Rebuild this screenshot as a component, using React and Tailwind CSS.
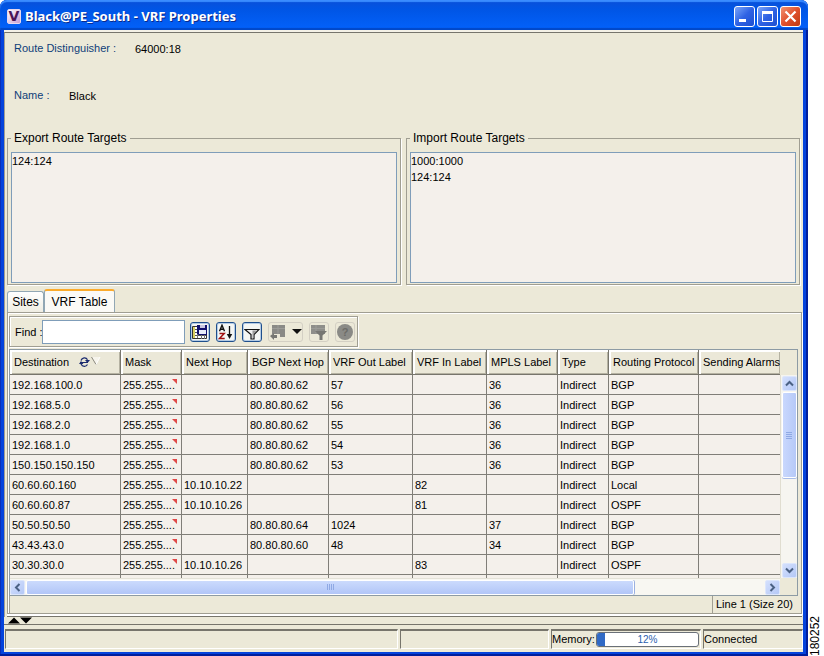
import { useState } from 'react'

const COLUMNS = [
  { key: 'destination', label: 'Destination', width: 'w-[111px]', sorted: true },
  { key: 'mask', label: 'Mask', width: 'w-[61px]' },
  { key: 'nextHop', label: 'Next Hop', width: 'w-[66px]' },
  { key: 'bgpNextHop', label: 'BGP Next Hop', width: 'w-[81px]' },
  { key: 'outLabel', label: 'VRF Out Label', width: 'w-[84px]' },
  { key: 'inLabel', label: 'VRF In Label', width: 'w-[74px]' },
  { key: 'mplsLabel', label: 'MPLS Label', width: 'w-[71px]' },
  { key: 'type', label: 'Type', width: 'w-[51px]' },
  { key: 'protocol', label: 'Routing Protocol', width: 'w-[90px]' },
  { key: 'alarms', label: 'Sending Alarms', width: 'w-auto' },
]

const MASK = '255.255....'

const ROUTES = [
  { destination: '192.168.100.0', mask: MASK, bgpNextHop: '80.80.80.62', outLabel: '57', mplsLabel: '36', type: 'Indirect', protocol: 'BGP' },
  { destination: '192.168.5.0', mask: MASK, bgpNextHop: '80.80.80.62', outLabel: '56', mplsLabel: '36', type: 'Indirect', protocol: 'BGP' },
  { destination: '192.168.2.0', mask: MASK, bgpNextHop: '80.80.80.62', outLabel: '55', mplsLabel: '36', type: 'Indirect', protocol: 'BGP' },
  { destination: '192.168.1.0', mask: MASK, bgpNextHop: '80.80.80.62', outLabel: '54', mplsLabel: '36', type: 'Indirect', protocol: 'BGP' },
  { destination: '150.150.150.150', mask: MASK, bgpNextHop: '80.80.80.62', outLabel: '53', mplsLabel: '36', type: 'Indirect', protocol: 'BGP' },
  { destination: '60.60.60.160', mask: MASK, nextHop: '10.10.10.22', inLabel: '82', type: 'Indirect', protocol: 'Local' },
  { destination: '60.60.60.87', mask: MASK, nextHop: '10.10.10.26', inLabel: '81', type: 'Indirect', protocol: 'OSPF' },
  { destination: '50.50.50.50', mask: MASK, bgpNextHop: '80.80.80.64', outLabel: '1024', mplsLabel: '37', type: 'Indirect', protocol: 'BGP' },
  { destination: '43.43.43.0', mask: MASK, bgpNextHop: '80.80.80.60', outLabel: '48', mplsLabel: '34', type: 'Indirect', protocol: 'BGP' },
  { destination: '30.30.30.0', mask: MASK, nextHop: '10.10.10.26', inLabel: '83', type: 'Indirect', protocol: 'OSPF' },
  {},
]

function TitleButton({ label, close, children }) {
  return (
    <button
      aria-label={label}
      className={
        close
          ? 'h-[21px] w-[21px] rounded-[3px] border border-white bg-linear-to-br from-[#f09070] via-[#e0502c] to-[#c03a10]'
          : 'h-[21px] w-[21px] rounded-[3px] border border-white bg-linear-to-br from-[#7ca4f8] via-[#2f62e4] to-[#1c4fd0]'
      }
    >
      <svg viewBox="0 0 19 19" className="h-[19px] w-[19px]" fill="none" stroke="#fff">
        {children}
      </svg>
    </button>
  )
}

function TitleBar() {
  return (
    <header className="flex h-[30px] shrink-0 items-center rounded-t-[7px] bg-linear-to-b from-[#0a4fd8] via-[#0055e5] via-30% to-[#0362fb] px-[7px] pt-[2px] shadow-[inset_0_2px_1px_#3a8cff,inset_0_-2px_1px_#0148c8]">
      <span className="flex h-[15px] w-[14px] items-center justify-center rounded-[2px] border border-[#e8d8ee] bg-linear-to-br from-white to-[#c89cd0] font-['DejaVu_Sans',sans-serif] text-[14px] leading-none font-bold text-[#4a1458]">
        V
      </span>
      <h1 className="ml-[4px] flex-1 truncate font-['Noto_Sans',sans-serif] text-[13px] font-bold text-white [text-shadow:1px_1px_0_#0a2a8c]">
        Black@PE_South - VRF Properties
      </h1>
      <div className="flex gap-[2px]">
        <TitleButton label="Minimize">
          <path d="M4 13.500h7" strokeWidth="3" />
        </TitleButton>
        <TitleButton label="Maximize">
          <path d="M4.500 5v9.500h10V5" />
          <path d="M4 5.500h11" strokeWidth="3" />
        </TitleButton>
        <TitleButton label="Close" close>
          <path d="M4.500 4.500l10 10M14.500 4.500l-10 10" strokeWidth="2.200" />
        </TitleButton>
      </div>
    </header>
  )
}

function TargetList({ title, targets }) {
  return (
    <fieldset className="min-w-0 flex-1 border border-[#a09e92] px-[3px] pt-[6px] pb-px shadow-[1px_1px_0_#fff]">
      <legend className="px-[3px] text-[12px] leading-4">{title}</legend>
      <ul className="h-[131px] border border-[#7f9db9] bg-[#f4f0eb] text-[11px] leading-4">
        {targets.map((target) => (
          <li key={target}>{target}</li>
        ))}
      </ul>
    </fieldset>
  )
}

function ToolButton({ label, children }) {
  return (
    <button
      aria-label={label}
      className="flex h-[20px] w-[20px] items-center justify-center rounded-[3px] border border-[#1f4f8c] bg-[#f4f6f4] shadow-[inset_0_0_0_1px_#b4cbe4]"
    >
      <svg viewBox="0 0 16 16" className="h-4 w-4 shrink-0">{children}</svg>
    </button>
  )
}

function Toolbar() {
  const [find, setFind] = useState('')

  return (
    <div className="flex h-[31px] w-[349px] shrink-0 items-center border border-[#a09e92] pl-[5px] shadow-[inset_1px_1px_0_#fff,1px_1px_0_#fff]">
      <label htmlFor="find" className="w-[27px] whitespace-nowrap">Find :</label>
      <input
        id="find"
        type="text"
        value={find}
        onChange={(e) => setFind(e.target.value)}
        className="h-6 w-[143px] border border-[#7f9db9] bg-white px-1 outline-none"
      />
      <div className="ml-[5px] flex gap-[6px]">
        <ToolButton label="Export table">
          <path d="M0.500 2.500h14v12h-14z" fill="#fff" stroke="#333" />
          <path d="M1 5.500h5M1 8.500h5M1 11.500h13" stroke="#555" />
          <path d="M5.500 3v11M9.500 10v5M12.500 10v5" stroke="#777" />
          <path d="M1 3h2v11H1z" fill="#d8cf60" />
          <path d="M5 1h10v10H6.500L5 9.500z" fill="#10106c" />
          <path d="M8 1h5v3H8z" fill="#c8c8e0" />
          <path d="M7 6h7v4H7z" fill="#e8ecfa" />
        </ToolButton>
        <ToolButton label="Sort table">
          <path d="M1.500 7.200L4 1.200l2.500 6M2.300 5.200h3.400" fill="none" stroke="#111" strokeWidth="1.400" />
          <path d="M1.500 9.500h4.700L1.500 14.500h5.200" fill="none" stroke="#a01010" strokeWidth="1.500" />
          <path d="M11.500 2v9" stroke="#111" strokeWidth="1.300" />
          <path d="M8.800 10h5.400l-2.700 5z" fill="#111" />
        </ToolButton>
        <ToolButton label="Filter">
          <path d="M1 5.500h14l-5 5V15H7v-4.500z" fill="#f0f0f0" stroke="#111" strokeWidth="1.200" />
          <path d="M8.500 6.500h4.500l-3.500 3.500v4h-1z" fill="#999" />
        </ToolButton>
        <button aria-label="Clear filter" className="flex h-[20px] w-[35px] items-center rounded-[3px] border border-[#d4d0c4]">
          <svg viewBox="0 0 33 18" className="h-[18px] w-[33px]">
            <path d="M3 2h13v12h-5v-3H3z" fill="#8a8a86" />
            <path d="M3 5.500h13M9 2v9" stroke="#9c9c98" />
            <path d="M1 13l4-3v2h3v3H5v2z" fill="#777773" />
            <path d="M23 6h10l-5 5z" fill="#111" />
          </svg>
        </button>
        <button aria-label="Filter rows" className="flex h-[20px] w-[20px] items-center rounded-[3px] border border-[#d4d0c4]">
          <svg viewBox="0 0 18 18" className="h-[18px] w-[18px]">
            <path d="M1 2h14v9H1z" fill="#8e8e8a" />
            <path d="M1 5.500h14M6 2v9" stroke="#9c9c98" />
            <path d="M5 8h12l-4.500 4.500V17h-3v-4.500z" fill="#777773" />
          </svg>
        </button>
        <button aria-label="Help" className="flex h-[20px] w-[20px] items-center justify-center rounded-[3px] border border-[#d4d0c4] text-[11px] font-bold text-[#6c6c68]">
          <span className="h-4 w-4 shrink-0 rounded-full bg-[#8a8a86] leading-4">?</span>
        </button>
      </div>
    </div>
  )
}

function SortMark() {
  return (
    <svg viewBox="0 0 22 12" className="h-3 w-[22px]" fill="none">
      <path d="M2 4.500C3 1.500 7 1 8.500 3.800M8.500 8.500C7 11 3.500 11 2 8" stroke="#1c2c70" strokeWidth="1.300" />
      <path d="M1 6.500h8" stroke="#1c2c70" />
      <path d="M6 4h5L8.500 7zM0 8h4.500L2 5z" fill="#1c2c70" />
      <path d="M13 1l4 7 4-7z" fill="#f6f4ec" />
      <path d="M12.500 1l4.500 7.500" stroke="#8c8a80" />
      <path d="M17 8.500L21 1" stroke="#fff" />
    </svg>
  )
}

function RouteTable() {
  return (
    <table className="w-full table-fixed border-separate border-spacing-0">
      <thead>
        <tr>
          {COLUMNS.map((col) => (
            <th
              key={col.key}
              className={`${col.width} h-[25px] border-r border-b border-[#77756c] bg-[#ebe8d8] p-0 pl-1 text-left font-normal whitespace-nowrap shadow-[inset_2px_2px_0_#fff,inset_-1px_-1px_0_#b5b2a2] last:border-r-0`}
            >
              {col.sorted ? (
                <span className="flex items-center gap-[10px]">
                  {col.label} <SortMark />
                </span>
              ) : (
                col.label
              )}
            </th>
          ))}
        </tr>
      </thead>
      <tbody>
        {ROUTES.map((route, i) => (
          <tr key={i}>
            {COLUMNS.map((col) => (
              <td
                key={col.key}
                className="relative h-5 border-r border-b border-[#807e78] bg-[#f4f0eb] p-0 pl-[2px] whitespace-nowrap last:border-r-0"
              >
                {route[col.key]}
                {col.key === 'mask' && route.mask && (
                  <svg viewBox="0 0 5 5" className="absolute top-1 right-1 h-[5px] w-[5px]">
                    <path d="M0 0h5v5z" fill="#e04848" />
                  </svg>
                )}
              </td>
            ))}
          </tr>
        ))}
      </tbody>
    </table>
  )
}

function ScrollButton({ label, path }) {
  return (
    <button
      aria-label={label}
      className="flex h-[15px] w-[15px] shrink-0 items-center justify-center rounded-[2px] border border-[#dce6fc] bg-linear-to-br from-[#d4e0fd] to-[#b4c8f6]"
    >
      <svg viewBox="0 0 9 9" className="h-[9px] w-[9px] shrink-0">
        <path d={path} fill="none" stroke="#4a6184" strokeWidth="2" />
      </svg>
    </button>
  )
}

function TablePanel() {
  return (
    <div className="flex min-h-0 flex-1 flex-col border border-[#8d9ba4]">
      <div className="flex min-h-0 flex-1">
        <div className="min-w-0 flex-1 overflow-hidden">
          <RouteTable />
        </div>
        <div className="flex w-[17px] shrink-0 flex-col">
          <div className="h-[25px] shrink-0" />
          <div className="flex flex-1 flex-col items-center border-l border-[#e0ddd0] bg-[#f6f5f0] pt-px">
            <ScrollButton label="Scroll up" path="M1 6.500l3.500-3.500 3.500 3.500" />
            <div className="mt-px flex h-[86px] w-[15px] flex-col items-center justify-center gap-px rounded-[2px] border border-white bg-linear-to-r from-[#c9d8fd] to-[#b6c9f8] shadow-[0_1px_0_#a8bce8]">
              <i className="h-px w-[6px] bg-[#8fa9e4]" />
              <i className="h-px w-[6px] bg-[#8fa9e4]" />
              <i className="h-px w-[6px] bg-[#8fa9e4]" />
              <i className="h-px w-[6px] bg-[#8fa9e4]" />
            </div>
            <div className="flex-1" />
            <ScrollButton label="Scroll down" path="M1 2.500l3.500 3.500 3.500-3.500" />
          </div>
        </div>
      </div>
      <div className="flex h-[17px] shrink-0 pr-[17px]">
        <div className="flex flex-1 items-center border-t border-[#e4e2d8] bg-[#f8f7f2]">
          <ScrollButton label="Scroll left" path="M6.500 1l-3.500 3.500 3.500 3.500" />
          <div className="ml-px flex h-[15px] w-[79%] items-center justify-center gap-px rounded-[2px] border border-white bg-linear-to-b from-[#cbdafd] to-[#b2c6f7] shadow-[1px_0_0_#9ab0e0]">
            <i className="h-[6px] w-px bg-[#8fa9e4]" />
            <i className="h-[6px] w-px bg-[#8fa9e4]" />
            <i className="h-[6px] w-px bg-[#8fa9e4]" />
            <i className="h-[6px] w-px bg-[#8fa9e4]" />
          </div>
          <div className="flex-1" />
          <ScrollButton label="Scroll right" path="M2.500 1l3.500 3.500-3.500 3.500" />
        </div>
      </div>
    </div>
  )
}

function StatusBar() {
  return (
    <footer className="flex h-[27px] shrink-0 items-center gap-[2px] pl-px">
      <div className="h-5 flex-1 border border-t-2 border-[#77756c] border-r-white border-b-white" />
      <div className="h-5 w-[149px] border border-t-2 border-[#77756c] border-r-white border-b-white" />
      <div className="flex h-5 w-[150px] items-center border border-t-2 border-[#77756c] border-r-white border-b-white">
        <span id="memory">Memory:</span>
        <div
          role="progressbar"
          aria-labelledby="memory"
          aria-valuenow={12}
          className="relative mx-px h-[15px] flex-1 overflow-hidden rounded-[3px] border border-[#6a7078] bg-white text-center text-[10px] leading-[13px] text-[#2c5fae]"
        >
          <div className="absolute inset-y-0 left-0 w-2 bg-[#316ac5]" />
          12%
        </div>
      </div>
      <div className="flex h-5 w-[100px] items-center border border-t-2 border-[#77756c] border-r-white border-b-white">
        Connected
      </div>
    </footer>
  )
}

export default function App() {
  const [tab, setTab] = useState('table')

  return (
    <div className="flex h-screen bg-white font-['Liberation_Sans',sans-serif] text-[11px] leading-4 text-black">
      <div className="flex min-w-0 flex-1 flex-col rounded-t-[7px] bg-[#0443dc] shadow-[inset_-2px_-2px_0_#001e9c,inset_1px_0_0_#0a2fb8]">
        <TitleBar />
        <div className="mr-[5px] mb-1 ml-1 flex min-h-0 flex-1 flex-col border-t-2 border-[#f4f1e6] bg-[#ece9d8]">
          <main className="flex min-h-0 flex-1 flex-col border-t border-l border-t-[#77756c] border-l-[#a09e92] pr-px pl-[2px]">
            <dl className="flex flex-col gap-[29px] pt-[7px] pl-[7px]">
              <div className="flex">
                <dt className="w-[121px] text-[#0f4078]">Route Distinguisher :</dt>
                <dd className="leading-[18px]">64000:18</dd>
              </div>
              <div className="flex">
                <dt className="w-[55px] text-[#0f4078]">Name :</dt>
                <dd className="leading-[18px]">Black</dd>
              </div>
            </dl>

            <div className="mt-[25px] mr-[2px] flex gap-[5px]">
              <TargetList title="Export Route Targets" targets={['124:124']} />
              <TargetList title="Import Route Targets" targets={['1000:1000', '124:124']} />
            </div>

            <div role="tablist" className="mt-1 flex items-end text-[12px]">
              <button
                role="tab"
                aria-selected={tab === 'sites'}
                onClick={() => setTab('sites')}
                className="h-[21px] w-[37px] rounded-t-[3px] border border-b-0 border-[#91a7b4] bg-linear-to-b from-white to-[#efede2]"
              >
                Sites
              </button>
              <button
                role="tab"
                aria-selected={tab === 'table'}
                onClick={() => setTab('table')}
                className="h-[23px] w-[71px] rounded-t-[3px] border border-t-2 border-b-0 border-[#91a7b4] border-t-[#fbab2c] bg-[#fbfaf6]"
              >
                VRF Table
              </button>
            </div>

            <section className="flex min-h-0 flex-1 flex-col border border-[#a09e92] pt-[3px] pr-[3px] pl-px shadow-[inset_1px_1px_0_#fff,1px_1px_0_#fff]">
              <Toolbar />
              <div className="h-[2px] shrink-0" />
              <TablePanel />
              <div className="flex h-[17px] shrink-0 justify-end border-l border-[#a09e92]">
                <span className="border-l border-[#a09e92] pr-[5px] pl-[3px]">Line 1 (Size 20)</span>
              </div>
            </section>
            <div className="h-[3px] shrink-0 border-t-2 border-b border-t-white border-b-[#77756c]" />
          </main>

          <div className="flex h-2 shrink-0 items-center border-b border-[#77756c] pl-1">
            <svg viewBox="0 0 24 7" className="h-[7px] w-6">
              <path d="M0 6.500L6 0.500l6 6zM12 0.500h12l-6 6z" fill="#000" />
            </svg>
          </div>
          <StatusBar />
        </div>
      </div>
      <aside className="flex w-4 shrink-0 items-end text-[12px] leading-[14px]">
        <span className="rotate-180 [writing-mode:vertical-rl]">180252</span>
      </aside>
    </div>
  )
}
